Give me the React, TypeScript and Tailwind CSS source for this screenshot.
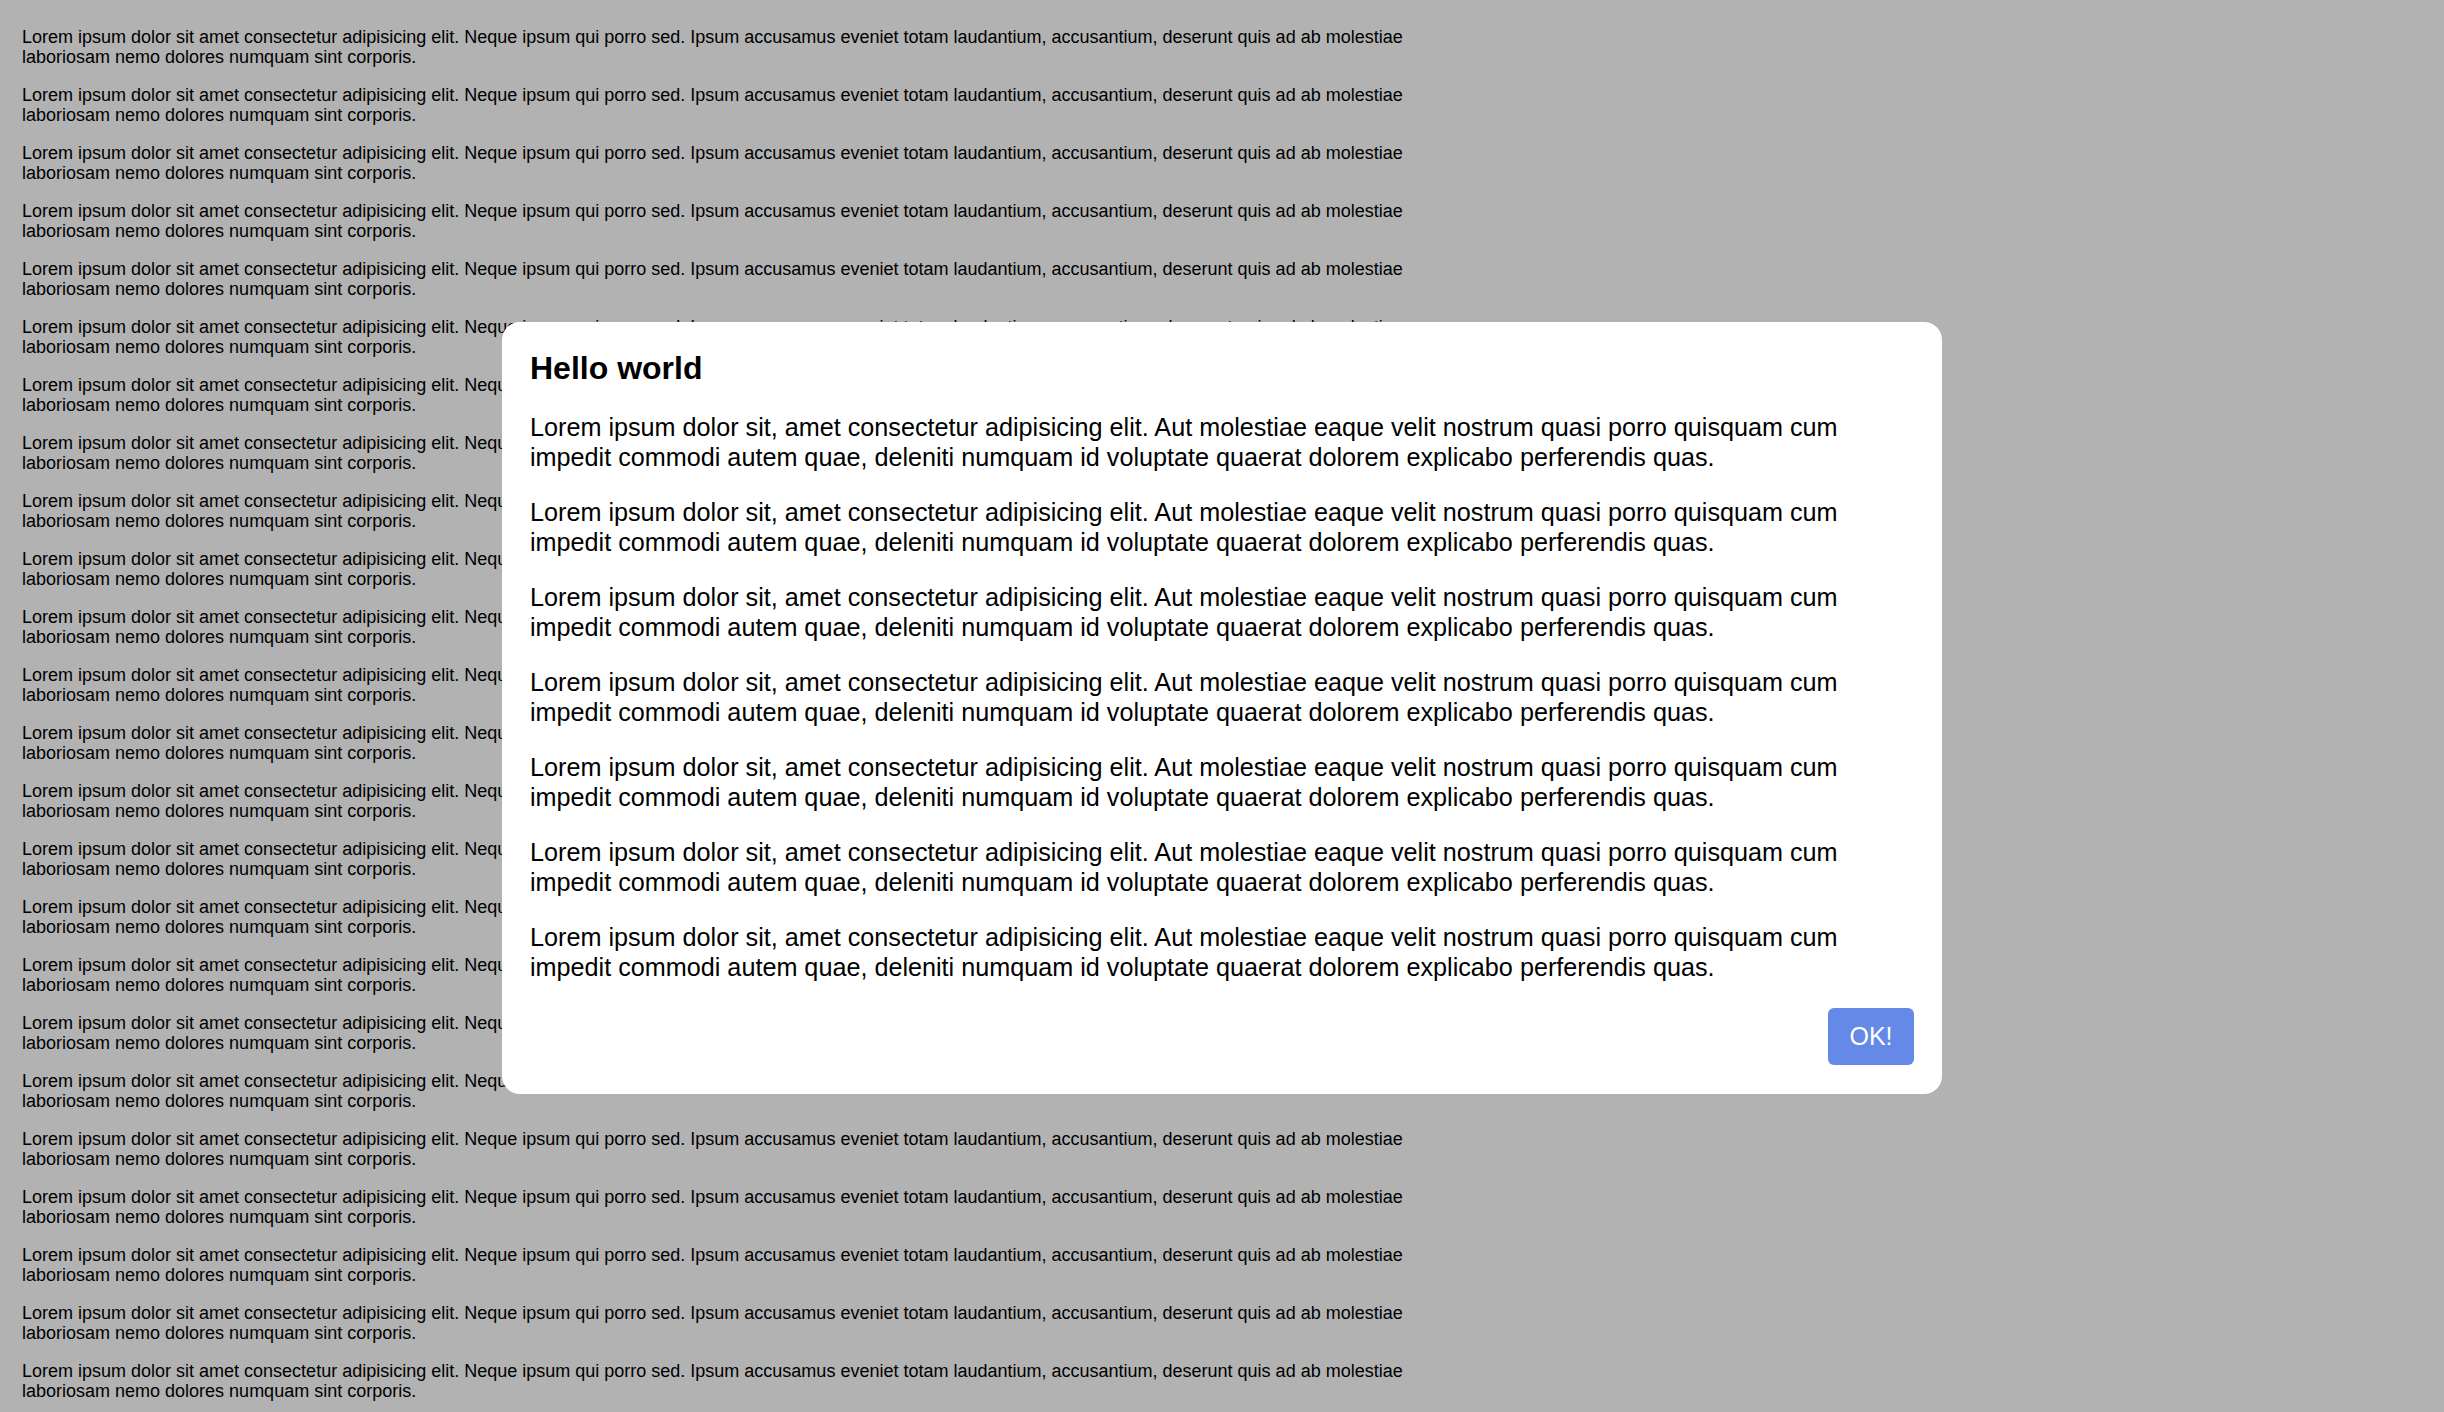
import React from "react";

const bgLine1 =
  "Lorem ipsum dolor sit amet consectetur adipisicing elit. Neque ipsum qui porro sed. Ipsum accusamus eveniet totam laudantium, accusantium, deserunt quis ad ab molestiae";
const bgLine2 = "laboriosam nemo dolores numquam sint corporis.";

const dlgText =
  "Lorem ipsum dolor sit, amet consectetur adipisicing elit. Aut molestiae eaque velit nostrum quasi porro quisquam cum impedit commodi autem quae, deleniti numquam id voluptate quaerat dolorem explicabo perferendis quas.";

export default function App() {
  const bg = Array.from({ length: 30 });
  const dlg = Array.from({ length: 7 });
  return (
    <div
      className="relative h-screen w-full overflow-hidden bg-white text-black"
      style={{ fontFamily: '"Liberation Sans", Arial, Helvetica, sans-serif' }}
    >
      <div className="px-[22px] pt-[27px]">
        {bg.map((_, i) => (
          <p key={i} className="mb-[18px] whitespace-nowrap text-[18px] leading-[20px]">
            {bgLine1}
            <br />
            {bgLine2}
          </p>
        ))}
      </div>
      <div className="fixed inset-0 flex items-center justify-center bg-black/30 pt-[3px]">
        <div className="flex h-[772px] w-[1440px] flex-col rounded-[18px] bg-white p-[28px]">
          <h1 className="mb-[26px] text-[32px] font-bold leading-[36px]">Hello world</h1>
          <div className="flex flex-col gap-[25px]">
            {dlg.map((_, i) => (
              <p key={i} className="text-[25.2px] leading-[30px]">
                {dlgText}
              </p>
            ))}
          </div>
          <div className="mt-[26px] flex justify-end">
            <button className="flex h-[57px] w-[86px] items-center justify-center rounded-[6px] bg-[#6489e6] text-[25px] leading-none text-white">
              OK!
            </button>
          </div>
        </div>
      </div>
    </div>
  );
}
